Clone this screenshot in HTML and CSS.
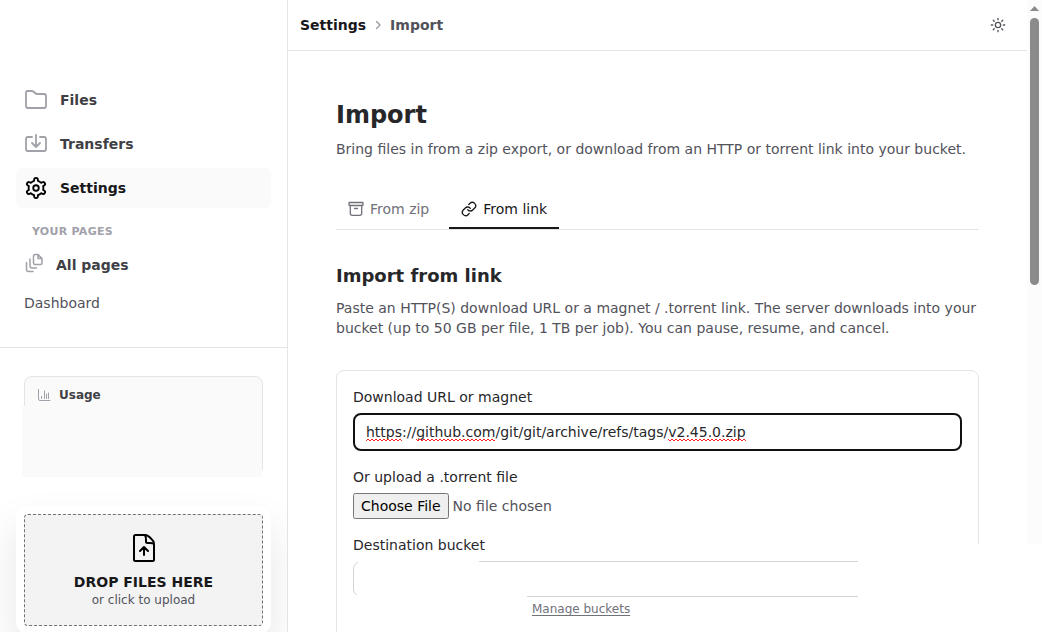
FILE: index.html
```html
<!DOCTYPE html>
<html lang="en">
<head>
    <meta charset="UTF-8">
    <meta name="viewport" content="width=device-width, initial-scale=1.0">
    <title>Import</title>
    <link rel="stylesheet" href="styles.css">
</head>
<body>
    <div class="app">
        <aside class="sidebar">
            <nav class="nav">
                <a class="nav-item" href="#">
                    <svg class="nav-icon" viewBox="0 0 24 24" fill="none" stroke="currentColor" stroke-width="1.800" stroke-linejoin="round"><path d="M2 18V4.500Q2 3 3.500 3H7.500Q9 3 10 4L11 5Q12 6 13.500 6H20Q22 6 22 8V18Q22 20 20 20H4Q2 20 2 18Z"/></svg>
                    Files
                </a>
                <a class="nav-item" href="#">
                    <svg class="nav-icon" viewBox="0 0 24 24" fill="none" stroke="currentColor" stroke-width="1.800" stroke-linecap="round" stroke-linejoin="round"><path d="M8 5H4Q2 5 2 7V17Q2 19 4 19H20Q22 19 22 17V7Q22 5 20 5H16M12 3V15M8 11L12 15L16 11"/></svg>
                    Transfers
                </a>
                <a class="nav-item active" href="#">
                    <svg class="nav-icon" viewBox="-1 -1 26 26" fill="currentColor"><path d="M12,8a4,4,0,1,0,4,4A4,4,0,0,0,12,8Zm0,6a2,2,0,1,1,2-2A2,2,0,0,1,12,14Z"/><path d="M21.294,13.9l-.444-.256a9.1,9.1,0,0,0,0-3.29l.444-.256a3,3,0,1,0-3-5.2l-.445.257A8.977,8.977,0,0,0,15,3.513V3A3,3,0,0,0,9,3v.513A8.977,8.977,0,0,0,6.152,5.159L5.705,4.9a3,3,0,0,0-3,5.2l.444.256a9.1,9.1,0,0,0,0,3.29l-.444.256a3,3,0,1,0,3,5.2l.445-.257A8.977,8.977,0,0,0,9,20.487V21a3,3,0,0,0,6,0v-.513a8.977,8.977,0,0,0,2.848-1.646l.447.258a3,3,0,0,0,3-5.2Zm-2.548-3.776a7.048,7.048,0,0,1,0,3.75,1,1,0,0,0,.464,1.133l1.084.626a1,1,0,0,1-1,1.733l-1.086-.628a1,1,0,0,0-1.215.165,6.984,6.984,0,0,1-3.243,1.875,1,1,0,0,0-.751.969V21a1,1,0,0,1-2,0V19.748a1,1,0,0,0-.751-.969A6.984,6.984,0,0,1,7.006,16.9a1,1,0,0,0-1.215-.165l-1.084.627a1,1,0,1,1-1-1.732l1.084-.626a1,1,0,0,0,.464-1.133,7.048,7.048,0,0,1,0-3.75A1,1,0,0,0,4.79,8.992L3.706,8.366a1,1,0,0,1,1-1.733l1.086.628A1,1,0,0,0,7.006,7.1a6.984,6.984,0,0,1,3.243-1.875A1,1,0,0,0,11,4.252V3a1,1,0,0,1,2,0V4.252a1,1,0,0,0,.751.969A6.984,6.984,0,0,1,16.994,7.1a1,1,0,0,0,1.215.165l1.084-.627a1,1,0,1,1,1,1.732l-1.084.626A1,1,0,0,0,18.746,10.125Z"/></svg>
                    Settings
                </a>
            </nav>

            <div class="pages">
                <div class="pages-title">YOUR PAGES</div>
                <a class="pages-all" href="#">
                    <svg class="pages-icon" viewBox="0 0 20 20" fill="none" stroke="currentColor" stroke-width="1.500" stroke-linecap="round" stroke-linejoin="round"><path d="M10.500 1.500H14L18 5.500V10Q18 11.500 16.500 11.500H11Q9.500 11.500 9.500 10V3Q9.500 1.500 11 1.500M14 1.500V5.500H18M6 6V13Q6 15 8 15H12.500M2.500 9.500V16.500Q2.500 18.500 4.500 18.500H9"/></svg>
                    All pages
                </a>
                <a class="pages-link" href="#">Dashboard</a>
            </div>

            <div class="sidebar-bottom">
                <section class="usage">
                    <div class="usage-title">
                        <svg class="usage-icon" viewBox="0 0 14 14" fill="none" stroke="currentColor" stroke-width="1" stroke-linecap="round"><path d="M1.500 1.500V11Q1.500 12.500 3 12.500H13M4.500 8.500V10.500M7.500 3V10.500M9.500 6V10.500M11.500 5V10.500"/></svg>
                        Usage
                    </div>
                    <div class="usage-body"></div>
                </section>

                <div class="drop-card">
                    <button class="drop-zone" type="button">
                        <svg class="drop-icon" viewBox="0 0 22 28" fill="none" stroke="currentColor" stroke-width="2" stroke-linecap="round" stroke-linejoin="round"><path d="M12 1H2.500Q1 1 1 2.500V25.500Q1 27 2.500 27H19.500Q21 27 21 25.500V10Q21 7 18 4.500Q15 1 12 1Q13 3 13 6V7.500Q13 9 14.500 9H17Q20 9 21 10M11 21V13.500M7 17L11 13L15 17"/></svg>
                        <span class="drop-title">DROP FILES HERE</span>
                        <span class="drop-text">or click to upload</span>
                    </button>
                </div>
            </div>
        </aside>

        <main class="main">
            <header class="topbar">
                <div class="breadcrumb">
                    <a href="#">Settings</a>
                    <svg class="crumb-icon" viewBox="0 0 12 12" fill="none" stroke="currentColor" stroke-width="1.500" stroke-linecap="round" stroke-linejoin="round"><path d="M4.500 2.500L8 6L4.500 9.500"/></svg>
                    <span>Import</span>
                </div>
                <button class="theme-btn" type="button" aria-label="Theme">
                    <svg viewBox="0 0 24 24" width="16" height="16" fill="none" stroke="currentColor" stroke-width="2" stroke-linecap="round"><circle cx="12" cy="12" r="4"/><path d="M12 2V4M12 20V22M4.900 4.900L6.300 6.300M17.700 17.700L19.100 19.100M2 12H4M20 12H22M6.300 17.700L4.900 19.100M19.100 4.900L17.700 6.300"/></svg>
                </button>
            </header>

            <div class="content">
                <h1>Import</h1>
                <p class="lead">Bring files in from a zip export, or download from an HTTP or torrent link into your bucket.</p>

                <div class="tabs">
                    <button class="tab" type="button">
                        <svg viewBox="0 0 16 16" width="16" height="16" fill="none" stroke="currentColor" stroke-width="1.300" stroke-linecap="round" stroke-linejoin="round"><rect x="1" y="1.500" width="14" height="3" rx=".5"/><path d="M2.300 4.500V12.500Q2.300 14.300 4.300 14.300H11.700Q13.700 14.300 13.700 12.500V4.500M6.500 7.500H9.500"/></svg>
                        From zip
                    </button>
                    <button class="tab tab-active" type="button">
                        <svg viewBox="0 0 24 24" width="16" height="16" fill="none" stroke="currentColor" stroke-width="2" stroke-linecap="round" stroke-linejoin="round"><path d="M10 13a5 5 0 0 0 7.540.54l3-3a5 5 0 0 0-7.070-7.070l-1.720 1.710"/><path d="M14 11a5 5 0 0 0-7.540-.54l-3 3a5 5 0 0 0 7.070 7.070l1.710-1.710"/></svg>
                        From link
                    </button>
                </div>

                <h2>Import from link</h2>
                <p class="intro">Paste an HTTP(S) download URL or a magnet / .torrent link. The server downloads into your bucket (up to 50 GB per file, 1 TB per job). You can pause, resume, and cancel.</p>

                <form class="card">
                    <div class="field">
                        <label for="url">Download URL or magnet</label>
                        <div class="url-box">
                            <input class="url-input" type="text" id="url" value="https://github.com/git/git/archive/refs/tags/v2.45.0.zip">
                            <!-- spelling marks -->
                            <svg class="spelling" width="384" height="4" aria-hidden="true">
                                <defs>
                                    <pattern id="wave" width="4" height="4" patternUnits="userSpaceOnUse"><path d="M-1 2L0 3L2 1L4 3L5 2" fill="none" stroke="#f22" stroke-width="1"/></pattern>
                                </defs>
                                <rect x="0" width="36" height="4" fill="url(#wave)"/>
                                <rect x="50" width="79" height="4" fill="url(#wave)"/>
                                <rect x="302" width="78" height="4" fill="url(#wave)"/>
                            </svg>
                        </div>
                    </div>
                    <div class="field">
                        <label for="torrent">Or upload a .torrent file</label>
                        <input class="file-input" type="file" id="torrent">
                    </div>
                    <div class="field">
                        <label for="bucket">Destination bucket</label>
                        <div class="select-box">
                            <select class="bucket-select" id="bucket"></select>
                            <div class="blank blank-value"></div>
                            <div class="blank blank-hint"></div>
                        </div>
                        <div class="hint"><a href="#">Manage buckets</a></div>
                    </div>
                </form>
            </div>
        </main>

        <div class="scrollbar">
            <svg class="scroll-arrow" viewBox="0 0 9 5" fill="currentColor"><path d="M0 5L4.500 0L9 5Z"/></svg>
            <div class="scroll-thumb"></div>
        </div>
        <div class="blank blank-corner"></div>
    </div>
</body>
</html>
```
FILE: styles.css
```css
* {
    box-sizing: border-box;
}

body {
    margin: 0;
    font-family: "DejaVu Sans", sans-serif;
    font-size: 14px;
    line-height: 20px;
    color: #27272a;
    background-color: #fff;
}

a {
    color: inherit;
    text-decoration: none;
}

button,
input,
select {
    font: inherit;
}

.app {
    position: relative;
    display: flex;
    height: 100vh;
    overflow: hidden;
}

/* Sidebar */
.sidebar {
    flex: none;
    width: 288px;
    border-right: 1px solid #e4e4e7;
    overflow: hidden;
}

.nav {
    display: flex;
    flex-direction: column;
    gap: 4px;
    padding: 80px 16px 0;
}

.nav-item {
    display: flex;
    align-items: center;
    gap: 12px;
    height: 40px;
    padding: 0 8px;
    border-radius: 6px;
    font-weight: bold;
    color: #3f3f46;
}

.nav-icon {
    width: 24px;
    height: 24px;
    color: #a1a1aa;
}

.nav-item.active {
    background-color: #fafafa;
    color: #18181b;
}

.nav-item.active .nav-icon {
    color: #000;
}

.pages {
    display: flex;
    flex-direction: column;
    padding: 14px 24px 30px;
    border-bottom: 1px solid #e4e4e7;
}

.pages-title {
    padding-left: 8px;
    font-size: 11px;
    font-weight: bold;
    letter-spacing: 0.025em;
    color: #a1a1aa;
}

.pages-all {
    display: flex;
    align-items: center;
    gap: 12px;
    height: 46px;
    font-weight: bold;
    color: #3f3f46;
}

.pages-icon {
    width: 20px;
    height: 20px;
    margin-bottom: 4px;
    color: #a1a1aa;
}

.pages-link {
    padding: 5px 0 4px;
    color: #52525b;
}

.sidebar-bottom {
    padding: 28px 16px;
}

.usage {
    position: relative;
    height: 100px;
    margin: 0 8px 30px;
    padding: 8px 12px;
    border: 1px solid #e4e4e7;
    border-radius: 8px;
    background-color: #fafafa;
}

.usage-title {
    display: flex;
    align-items: center;
    gap: 8px;
    font-size: 12px;
    font-weight: bold;
    color: #3f3f46;
}

.usage-icon {
    width: 14px;
    height: 14px;
    color: #a1a1aa;
}

.usage-body {
    position: absolute;
    top: 29px;
    right: 0;
    bottom: -2px;
    left: -3px;
    background-color: #fafafa;
}

.drop-card {
    padding: 8px;
    border-radius: 12px;
    background-color: #fff;
    box-shadow: 0 20px 40px rgba(0, 0, 0, 0.1);
}

.drop-zone {
    display: flex;
    flex-direction: column;
    align-items: center;
    width: 100%;
    height: 112px;
    padding: 19px 0 0;
    border: 1px dashed #71717a;
    border-radius: 4px;
    background-color: #f3f3f3;
    cursor: pointer;
}

.drop-icon {
    width: 22px;
    height: 28px;
    margin-bottom: 10px;
    color: #000;
}

.drop-title {
    font-weight: bold;
    color: #18181b;
}

.drop-text {
    font-size: 12px;
    line-height: 16px;
    color: #52525b;
}

/* Main column */
.main {
    flex: 1;
    min-width: 0;
}

.topbar {
    display: flex;
    align-items: center;
    justify-content: space-between;
    height: 51px;
    padding: 0 16px 0 12px;
    border-bottom: 1px solid #e4e4e7;
}

.breadcrumb {
    display: flex;
    align-items: center;
    gap: 6px;
    font-weight: bold;
    color: #52525b;
}

.breadcrumb a {
    color: #18181b;
}

.crumb-icon {
    width: 12px;
    height: 12px;
    color: #a1a1aa;
}

.theme-btn {
    display: flex;
    padding: 5px;
    border: none;
    background: none;
    color: #52525b;
    cursor: pointer;
}

.content {
    padding: 48px;
}

h1 {
    margin: 0 0 8px;
    font-size: 24px;
    line-height: 32px;
}

h2 {
    margin: 32px 0 8px;
    font-size: 18px;
    line-height: 28px;
}

.lead,
.intro {
    margin: 0;
    color: #52525b;
}

.tabs {
    display: flex;
    gap: 8px;
    margin-top: 30px;
    border-bottom: 1px solid #e4e4e7;
}

.tab {
    display: flex;
    align-items: center;
    gap: 6px;
    height: 40px;
    padding: 2px 12px 0;
    border: none;
    border-bottom: 2px solid transparent;
    background: none;
    color: #71717a;
    cursor: pointer;
}

.tab-active {
    border-color: #18181b;
    color: #18181b;
}

/* Form */
.card {
    display: flex;
    flex-direction: column;
    gap: 16px;
    min-height: 400px;
    margin-top: 32px;
    padding: 16px;
    border: 1px solid #e4e4e7;
    border-radius: 8px;
}

.field {
    display: flex;
    flex-direction: column;
    gap: 6px;
}

.url-box,
.select-box {
    position: relative;
    display: flex;
}

.url-input {
    width: 100%;
    height: 38px;
    padding: 0 11px;
    border: 2px solid #111;
    border-radius: 8px;
    outline: none;
    background-color: #fff;
    color: #27272a;
}

.spelling {
    position: absolute;
    left: 13px;
    bottom: 9px;
}

.file-input {
    height: 26px;
    color: #52525b;
}

.file-input::file-selector-button {
    height: 26px;
    font: inherit;
}

.bucket-select {
    width: 100%;
    height: 36px;
    padding: 0 12px;
    border: 1px solid #d4d4d8;
    border-radius: 8px;
    appearance: none;
    background-color: #fff;
}

.hint {
    margin-left: 179px;
    font-size: 12px;
    line-height: 12px;
    color: #71717a;
}

.hint a {
    text-decoration: underline;
    text-underline-offset: 2px;
}

/* Blank areas */
.blank {
    position: absolute;
    background-color: #fff;
}

.blank-value {
    top: 0;
    left: 5px;
    width: 121px;
    height: 34px;
}

.blank-hint {
    top: 34px;
    left: 0;
    width: 174px;
    height: 30px;
}

.blank-corner {
    top: 544px;
    right: 0;
    bottom: 0;
    width: 184px;
}

/* Scrollbar */
.scrollbar {
    display: flex;
    flex-direction: column;
    align-items: center;
    gap: 7px;
    width: 15px;
    padding-top: 6px;
    background-color: #fcfcfc;
    color: #8b8b8b;
}

.scroll-arrow {
    width: 9px;
    height: 5px;
}

.scroll-thumb {
    width: 9px;
    height: 267px;
    border-radius: 5px;
    background-color: #8b8b8b;
}
```
